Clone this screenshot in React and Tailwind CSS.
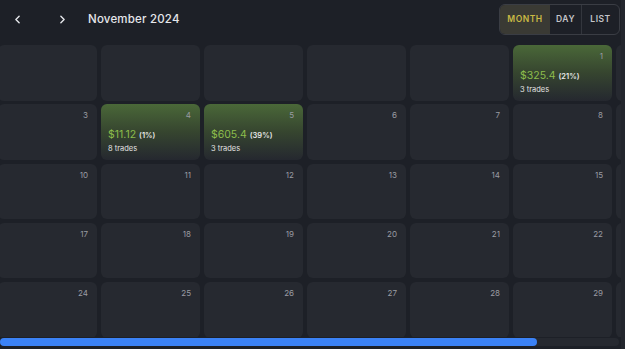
import React from 'react';
import { ChevronLeft, ChevronRight } from 'lucide-react';

const font = { fontFamily: 'Inter, "Noto Sans", sans-serif' };

// Nov 2024 starts on a Friday, week starts Sunday
const buildWeeks = () => {
  const cells = [];
  for (let i = 0; i < 5; i++) cells.push(null);
  for (let d = 1; d <= 30; d++) cells.push(d);
  return cells.slice(0, 35);
};

const stats = {
  1: { pnl: '$325.4', pct: '(21%)', trades: '3 trades' },
  4: { pnl: '$11.12', pct: '(1%)', trades: '8 trades' },
  5: { pnl: '$605.4', pct: '(39%)', trades: '3 trades' },
};

const DayCell = ({ day, hideLabel }) => {
  const s = day ? stats[day] : null;
  return (
    <div
      className={`relative rounded-[6px] ${
        s ? 'bg-gradient-to-b from-[#4a6838] via-[#36452f] to-[#25282f]' : 'bg-[#262930]'
      }`}
    >
      {day && !hideLabel && (
        <span className="absolute right-[9px] top-[7px] text-[8px] leading-none text-[#9a9ca3]">{day}</span>
      )}
      {s && (
        <div className="absolute left-[7px] top-[26px]">
          <div className="flex items-baseline gap-[3px]">
            <span className="text-[10.5px] leading-none text-[#8cbd4c]">{s.pnl}</span>
            <span className="text-[7.5px] font-semibold leading-none text-[#e8e8e8]">{s.pct}</span>
          </div>
          <div className="mt-[4px] text-[7.5px] leading-none text-[#e2e2e2]">{s.trades}</div>
        </div>
      )}
    </div>
  );
};

export default function App() {
  const cells = buildWeeks();
  return (
    <div className="w-[625px] h-[349px] overflow-hidden bg-[#1d2027] flex" style={font}>
      <div className="w-[621px] flex flex-col">
        {/* HEADER */}
        <div className="h-[45px] flex items-start pt-[4px]">
          <div className="h-[31px] flex items-center">
            <ChevronLeft size={13} strokeWidth={2.6} className="ml-[11px] text-[#e5e7eb]" />
            <ChevronRight size={13} strokeWidth={2.6} className="ml-[32px] text-[#e5e7eb]" />
            <span className="ml-[19px] text-[11.5px] font-medium text-[#e5e7eb] tracking-[0.2px]">November 2024</span>
          </div>
          <div className="ml-auto mr-[1px] flex h-[31px] rounded-[6px] border border-[#3a3d44] overflow-hidden text-[8.5px] font-semibold tracking-[0.5px]">
            <div className="w-[50px] flex items-center justify-center bg-[#3a3a34] text-[#c9b944]">MONTH</div>
            <div className="w-[32px] flex items-center justify-center text-[#c4c5c9] border-r border-[#33363d]">DAY</div>
            <div className="w-[37px] flex items-center justify-center text-[#c4c5c9]">LIST</div>
          </div>
        </div>

        {/* CALENDAR GRID */}
        <div className="h-[292px] overflow-hidden">
          <div className="ml-[-2px] grid grid-cols-[repeat(7,99px)] grid-rows-[repeat(5,55.5px)] gap-x-[4px] gap-y-[3.75px]">
            {cells.map((d, i) => (
              <DayCell key={i} day={d} hideLabel={i % 7 === 6} />
            ))}
          </div>
        </div>

        {/* SCROLLBAR */}
        <div className="h-[8px] mt-[1px] flex rounded-full bg-[#262930] mr-[2px]">
          <div className="w-[537px] h-full rounded-full bg-[#3b82f6]" />
        </div>
      </div>
      <div className="w-[4px] bg-[#23262d]" />
    </div>
  );
}
